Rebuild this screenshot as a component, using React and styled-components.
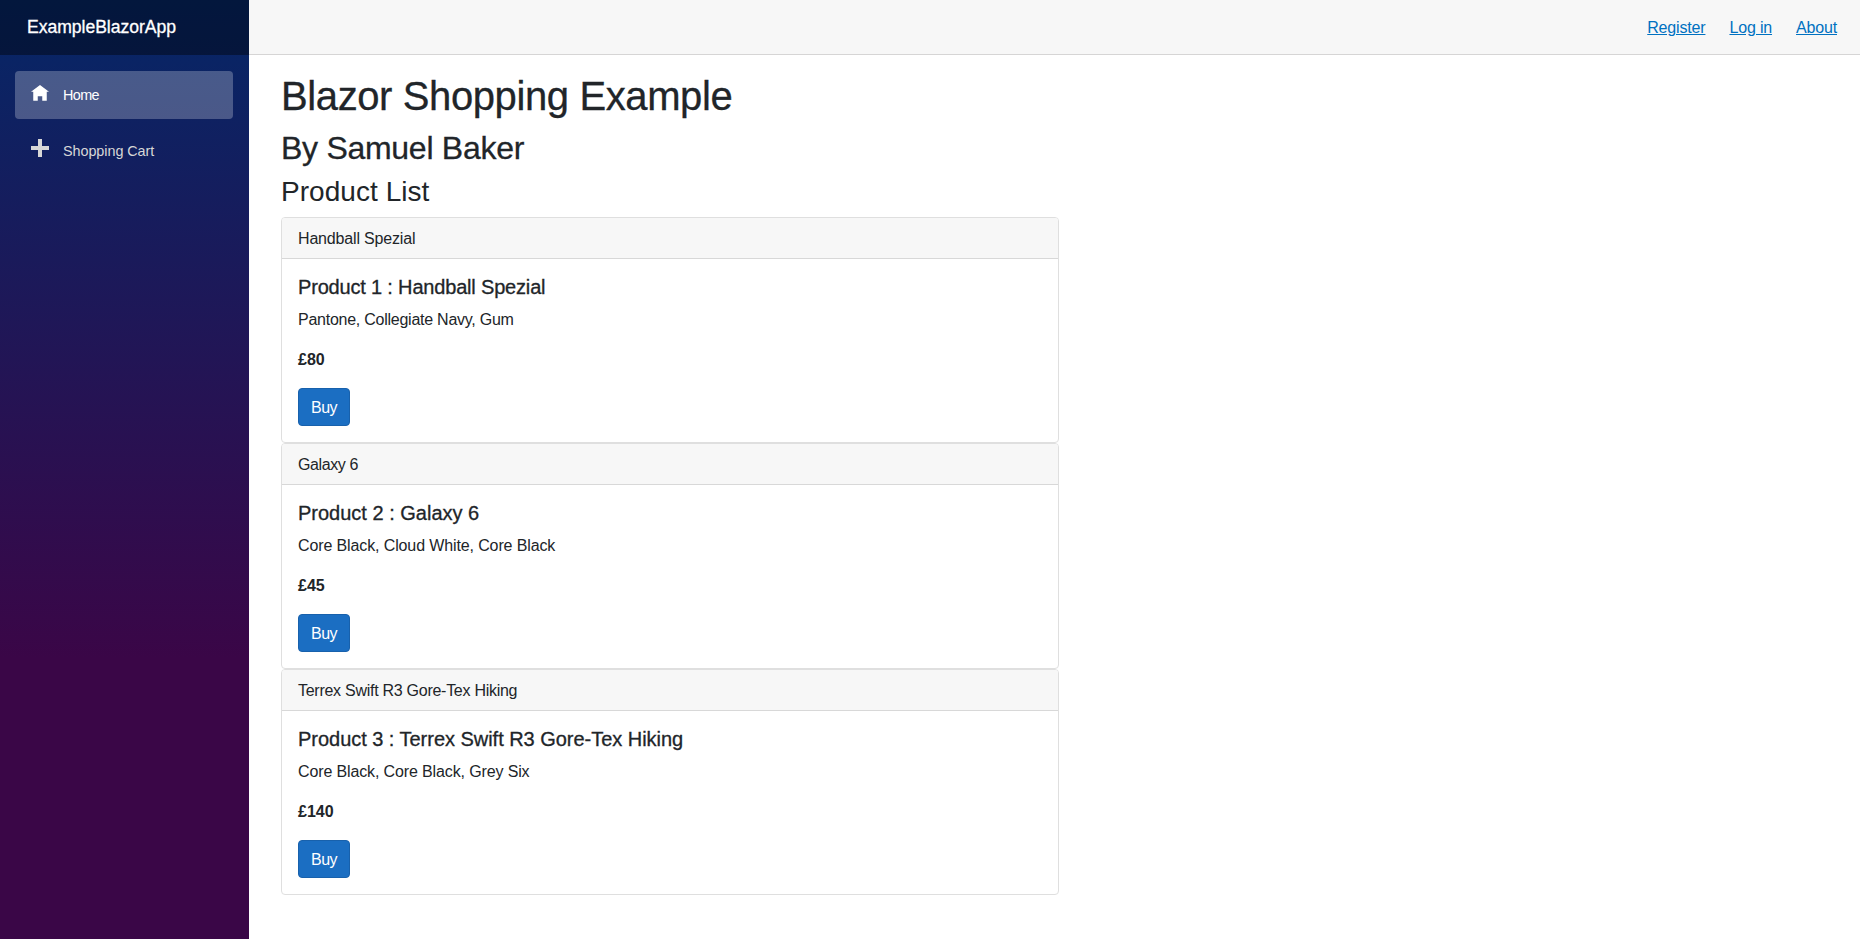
import React from 'react';
import styled, { createGlobalStyle } from 'styled-components';

const GlobalStyle = createGlobalStyle`
  *, *::before, *::after { box-sizing: border-box; }
  html, body { margin: 0; padding: 0; }
  body {
    font-family: "Liberation Sans", Arial, sans-serif;
    font-size: 16px;
    line-height: 1.5;
    color: #212529;
    background: #fff;
    overflow: hidden;
  }
`;

const Page = styled.div`
  display: flex;
  height: 100vh;
`;

const Sidebar = styled.aside`
  flex: 0 0 249px;
  background-image: linear-gradient(180deg, rgb(5, 39, 103) 0%, #3a0647 70%);
`;

const BrandRow = styled.div`
  display: flex;
  align-items: center;
  height: 55px;
  padding: 0 27px;
  background: rgba(0, 0, 0, 0.4);
`;

const Brand = styled.span`
  font-size: 17.6px;
  letter-spacing: -0.04px;
  color: #fff;
  -webkit-text-stroke: 0.3px #fff;
`;

const Nav = styled.nav`
  display: flex;
  flex-direction: column;
  gap: 8px;
  padding: 16px 16px 0 15px;
`;

const NavLink = styled.a`
  display: flex;
  height: 48px;
  padding: 0 16px;
  border-radius: 4px;
  font-size: 14.4px;
  line-height: 48px;
  letter-spacing: ${({ $tracking }) => $tracking}px;
  color: ${({ $active }) => ($active ? '#fff' : '#d7d7d7')};
  background: ${({ $active }) => ($active ? 'rgba(255, 255, 255, 0.25)' : 'transparent')};
`;

const NavIcon = styled.svg`
  width: 18px;
  height: 18px;
  margin: ${({ $top }) => $top}px 14px 0 0;
  fill: currentColor;
`;

const Main = styled.main`
  flex: 1;
  min-width: 0;
`;

const TopRow = styled.header`
  display: flex;
  align-items: center;
  justify-content: flex-end;
  gap: 24px;
  height: 55px;
  padding: 2px 23px 0 0;
  background: #f7f7f7;
  border-bottom: 1px solid #d6d5d5;
`;

const TopLink = styled.a`
  color: #0071c1;
  letter-spacing: -0.17px;
  text-decoration: underline;
`;

const Content = styled.article`
  padding: 16.6px 24px 0 32px;
`;

const Title = styled.h1`
  margin: 0 0 9px;
  font-size: 40px;
  font-weight: 400;
  line-height: 1.2;
  letter-spacing: -0.39px;
  -webkit-text-stroke: 0.3px currentColor;
`;

const Subtitle = styled.h2`
  margin: 0 0 8px;
  font-size: 32px;
  font-weight: 400;
  line-height: 1.2;
  letter-spacing: -0.28px;
  -webkit-text-stroke: 0.3px currentColor;
`;

const SectionTitle = styled.h3`
  margin: 0 0 8px;
  font-size: 28px;
  font-weight: 400;
  line-height: 1.2;
  letter-spacing: 0.05px;
`;

const Card = styled.section`
  width: 778px;
  height: 226px;
  border: 1px solid #dfdfdf;
  border-radius: 4px;
  overflow: hidden;
`;

const CardHeader = styled.div`
  padding: 9px 16px 7px;
  letter-spacing: ${({ $tracking }) => $tracking}px;
  background: #f7f7f7;
  border-bottom: 1px solid #d8d8d8;
`;

const CardBody = styled.div`
  padding: 16px;
`;

const CardTitle = styled.h5`
  margin: 0 0 9px;
  font-size: 20px;
  font-weight: 400;
  line-height: 1.2;
  letter-spacing: ${({ $tracking }) => $tracking}px;
  -webkit-text-stroke: 0.3px currentColor;
`;

const Description = styled.p`
  margin: 0 0 16px;
  letter-spacing: ${({ $tracking }) => $tracking}px;
`;

const Price = styled.p`
  margin: 0 0 16px;
  font-weight: 700;
`;

const BuyButton = styled.button`
  display: block;
  width: 52px;
  height: 38px;
  padding: 7px 12px 5px;
  border: 1px solid #1861ac;
  border-radius: 4px;
  font: inherit;
  letter-spacing: -0.5px;
  text-align: left;
  color: #fff;
  background: #1b6ec2;
`;

const products = [
  {
    name: 'Handball Spezial',
    colours: 'Pantone, Collegiate Navy, Gum',
    price: 80,
    tracking: { header: -0.17, title: -0.18, text: -0.25 },
  },
  {
    name: 'Galaxy 6',
    colours: 'Core Black, Cloud White, Core Black',
    price: 45,
    tracking: { header: -0.4, title: 0, text: -0.12 },
  },
  {
    name: 'Terrex Swift R3 Gore-Tex Hiking',
    colours: 'Core Black, Core Black, Grey Six',
    price: 140,
    tracking: { header: -0.27, title: -0.03, text: -0.13 },
  },
];

export default function App() {
  return (
    <>
      <GlobalStyle />
      <Page>
        <Sidebar>
          <BrandRow>
            <Brand>ExampleBlazorApp</Brand>
          </BrandRow>
          <Nav>
            <NavLink $active $tracking={-0.6}>
              <NavIcon $top={14} viewBox="0 0 8 8">
                <path d="M4 0l-4 3h1v4h2v-2h2v2h2v-4h1l-4-3z" />
              </NavIcon>
              Home
            </NavLink>
            <NavLink $tracking={-0.06}>
              <NavIcon $top={12} viewBox="0 0 18 18">
                <path d="M7 0v7H0v4h7v7h4v-7h7V7h-7V0z" />
              </NavIcon>
              Shopping Cart
            </NavLink>
          </Nav>
        </Sidebar>
        <Main>
          <TopRow>
            <TopLink>Register</TopLink>
            <TopLink>Log in</TopLink>
            <TopLink>About</TopLink>
          </TopRow>
          <Content>
            <Title>Blazor Shopping Example</Title>
            <Subtitle>By Samuel Baker</Subtitle>
            <SectionTitle>Product List</SectionTitle>
            {products.map(({ name, colours, price, tracking }, index) => (
              <Card key={name}>
                <CardHeader $tracking={tracking.header}>{name}</CardHeader>
                <CardBody>
                  <CardTitle $tracking={tracking.title}>{`Product ${index + 1} : ${name}`}</CardTitle>
                  <Description $tracking={tracking.text}>{colours}</Description>
                  <Price>{`£${price}`}</Price>
                  <BuyButton>Buy</BuyButton>
                </CardBody>
              </Card>
            ))}
          </Content>
        </Main>
      </Page>
    </>
  );
}
